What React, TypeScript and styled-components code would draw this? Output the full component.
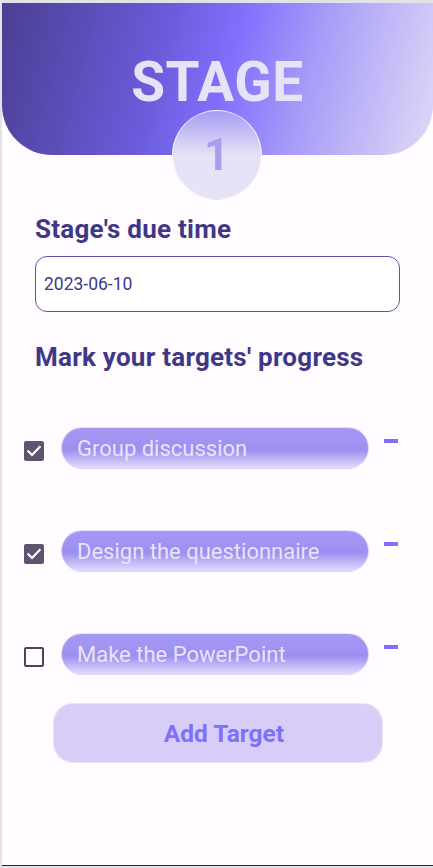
import * as React from "react"
import styled, { createGlobalStyle } from "styled-components"

const GlobalStyle = createGlobalStyle`
  html, body {
    margin: 0;
    padding: 0;
    background: #e3e2e6;
    font-family: Roboto, "Liberation Sans", sans-serif;
  }
`

interface ITarget {
  title: string;
  done: boolean;
}

const targets: ITarget[] = [
  { title: "Group discussion", done: true },
  { title: "Design the questionnaire", done: true },
  { title: "Make the PowerPoint", done: false },
]

const Screen = styled.div`
  margin: 3px 0 0 2px;
  height: 862px;
  background: #fffbff;
  border-bottom: 1px solid #2b2b2b;
  display: flex;
  flex-direction: column;
  overflow: hidden;
`
const Header = styled.div`
  position: relative;
  height: 152px;
  flex-shrink: 0;
  border-radius: 0 0 50px 50px;
  background: linear-gradient(105deg, #4a3f92 0%, #6a5ad8 35%, #8070fc 52%, #a89df8 70%, #dedaf6 100%);
  display: flex;
  justify-content: center;
`
const StageTitle = styled.h1`
  margin: 47px 0 0;
  font-size: 55px;
  font-weight: 700;
  letter-spacing: 0.5px;
  line-height: 64px;
  color: #e6e3f7;
`
const StageBadge = styled.div`
  position: absolute;
  left: 50%;
  top: 107px;
  width: 88px;
  height: 88px;
  margin-left: -46px;
  border-radius: 50%;
  border: 1px solid rgba(255, 255, 255, 0.7);
  background: linear-gradient(180deg, #a69cf5 0%, #d6d2f6 38%, #e6e3f7 52%, #e6e3f7 100%);
  display: flex;
  align-items: center;
  justify-content: center;
  font-size: 44px;
  font-weight: 700;
  color: #a89ef0;
`
const Body = styled.div`
  padding: 57px 33px 0 33px;
  display: flex;
  flex-direction: column;
`
const SectionTitle = styled.h2<{ $top?: number }>`
  margin: ${p => p.$top || 0}px 0 0;
  font-size: 26px;
  font-weight: 700;
  letter-spacing: 0.25px;
  line-height: 34px;
  color: #3e3887;
`
const DateField = styled.div`
  margin-top: 10px;
  height: 54px;
  border: 1.5px solid #5d56a2;
  border-radius: 12px;
  background: #ffffff;
  display: flex;
  align-items: center;
  padding-left: 8px;
  font-size: 17.5px;
  color: #3e3887;
`
const TargetList = styled.div`
  margin: 53px -33px 0 -11px;
  display: flex;
  flex-direction: column;
  gap: 61px;
`
const TargetRow = styled.div`
  display: flex;
  align-items: flex-start;
`
const CheckBox = styled.div<{ $checked: boolean }>`
  margin-top: 14px;
  width: 20px;
  height: 20px;
  box-sizing: border-box;
  border-radius: 2px;
  background: ${p => (p.$checked ? "#5d5570" : "transparent")};
  border: ${p => (p.$checked ? "none" : "2px solid #4a4650")};
  display: flex;
  align-items: center;
  justify-content: center;
`
const TargetPill = styled.div`
  margin-left: 17px;
  width: 308px;
  height: 42px;
  box-sizing: border-box;
  border-radius: 21px;
  border: 1px solid rgba(230, 226, 250, 0.8);
  background: linear-gradient(180deg, #a699f3 0%, #9c8ff1 55%, #c4baf7 80%, #e2dbfb 100%);
  display: flex;
  align-items: center;
  padding-left: 15px;
  font-size: 22px;
  color: #e8e4f8;
`
const RemoveBar = styled.div`
  margin: 12px 0 0 15px;
  width: 14px;
  height: 4px;
  background: #7f6ffb;
`
const AddButton = styled.div`
  margin: 28px 0 0 18px;
  width: 330px;
  height: 60px;
  box-sizing: border-box;
  padding-left: 12px;
  border-radius: 20px;
  border: 1px solid rgba(236, 230, 252, 0.9);
  background: linear-gradient(180deg, #dccdf9 0%, #d6cdf6 60%, #dccdf9 100%);
  display: flex;
  align-items: center;
  justify-content: center;
  font-size: 24.5px;
  font-weight: 700;
  color: #7f6ffb;
`

function Check() {
  return (
    <svg width="16" height="16" viewBox="0 0 24 24">
      <path d="M3.5 12.5l5.5 5.5L20.5 6" fill="none" stroke="#ffffff" strokeWidth="3.2" strokeLinecap="square" />
    </svg>
  )
}

export default function App() {
  return (
    <>
      <GlobalStyle />
      <Screen>
        <Header>
          <StageTitle>STAGE</StageTitle>
          <StageBadge>1</StageBadge>
        </Header>
        <Body>
          <SectionTitle>Stage's due time</SectionTitle>
          <DateField>2023-06-10</DateField>
          <SectionTitle $top={28}>Mark your targets' progress</SectionTitle>
          <TargetList>
            {targets.map((t, i) => (
              <TargetRow key={i}>
                <CheckBox $checked={t.done}>{t.done && <Check />}</CheckBox>
                <TargetPill>{t.title}</TargetPill>
                <RemoveBar />
              </TargetRow>
            ))}
          </TargetList>
          <AddButton>Add Target</AddButton>
        </Body>
      </Screen>
    </>
  )
}
